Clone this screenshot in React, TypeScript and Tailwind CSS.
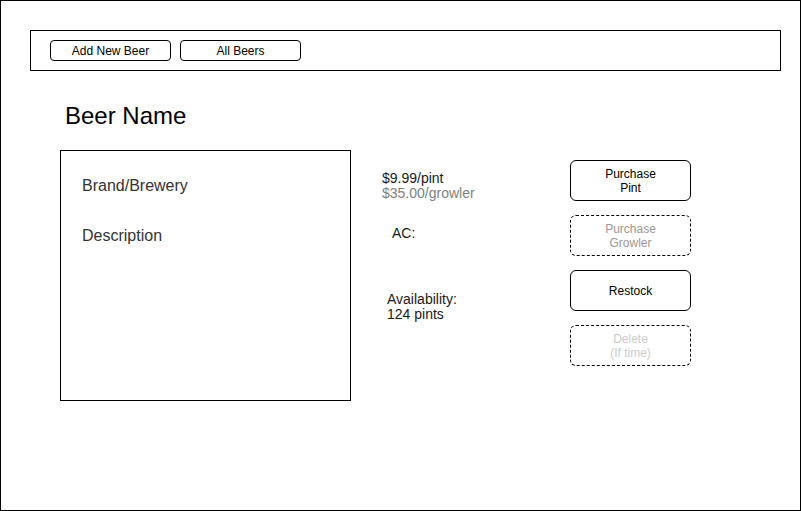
import React from "react";

function NavButton({ label }: { label: string }) {
  return (
    <div className="w-[121px] h-[21px] border border-black rounded-[4px] flex items-center justify-center text-[12px] leading-none">
      {label}
    </div>
  );
}

function ActionButton({
  lines,
  variant = "solid",
}: {
  lines: string[];
  variant?: "solid" | "ghost" | "faint";
}) {
  const style =
    variant === "solid"
      ? "border-solid text-black"
      : variant === "ghost"
        ? "border-dashed text-[#999999]"
        : "border-dashed text-[#cccccc]";
  return (
    <div
      className={`w-[121px] h-[41px] border border-black rounded-[6px] flex flex-col items-center justify-center text-[12px] leading-[14px] ${style}`}
    >
      {lines.map((line) => (
        <span key={line}>{line}</span>
      ))}
    </div>
  );
}

export default function App() {
  return (
    <div className="w-[801px] h-[511px] border border-black bg-white p-[29px] font-['Liberation_Sans',Arial,sans-serif] text-black">
      {/* Top nav */}
      <div className="w-[751px] h-[41px] border border-black flex items-start gap-[9px] pl-[19px] pt-[9px]">
        <NavButton label="Add New Beer" />
        <NavButton label="All Beers" />
      </div>

      <h1 className="mt-[31px] ml-[35px] text-[24px] leading-[28px]">Beer Name</h1>

      <div className="mt-[20px] ml-[30px] flex items-start">
        {/* Details box */}
        <div className="w-[291px] h-[251px] border border-black pl-[21px] pt-[26px] text-[16px] leading-[18px] text-[#333333]">
          <p>Brand/Brewery</p>
          <p className="mt-[32px]">Description</p>
        </div>

        {/* Info column */}
        <div className="w-[219px] pl-[31px] pt-[21px] text-[14px] leading-[15px] text-[#1a1a1a]">
          <p>$9.99/pint</p>
          <p className="text-[#808080]">$35.00/growler</p>
          <p className="mt-[25px] ml-[10px]">AC:</p>
          <div className="mt-[51px] ml-[5px]">
            <p>Availability:</p>
            <p>124 pints</p>
          </div>
        </div>

        {/* Actions */}
        <div className="mt-[10px] flex flex-col gap-[14px]">
          <ActionButton lines={["Purchase", "Pint"]} />
          <ActionButton lines={["Purchase", "Growler"]} variant="ghost" />
          <ActionButton lines={["Restock"]} />
          <ActionButton lines={["Delete", "(If time)"]} variant="faint" />
        </div>
      </div>
    </div>
  );
}
